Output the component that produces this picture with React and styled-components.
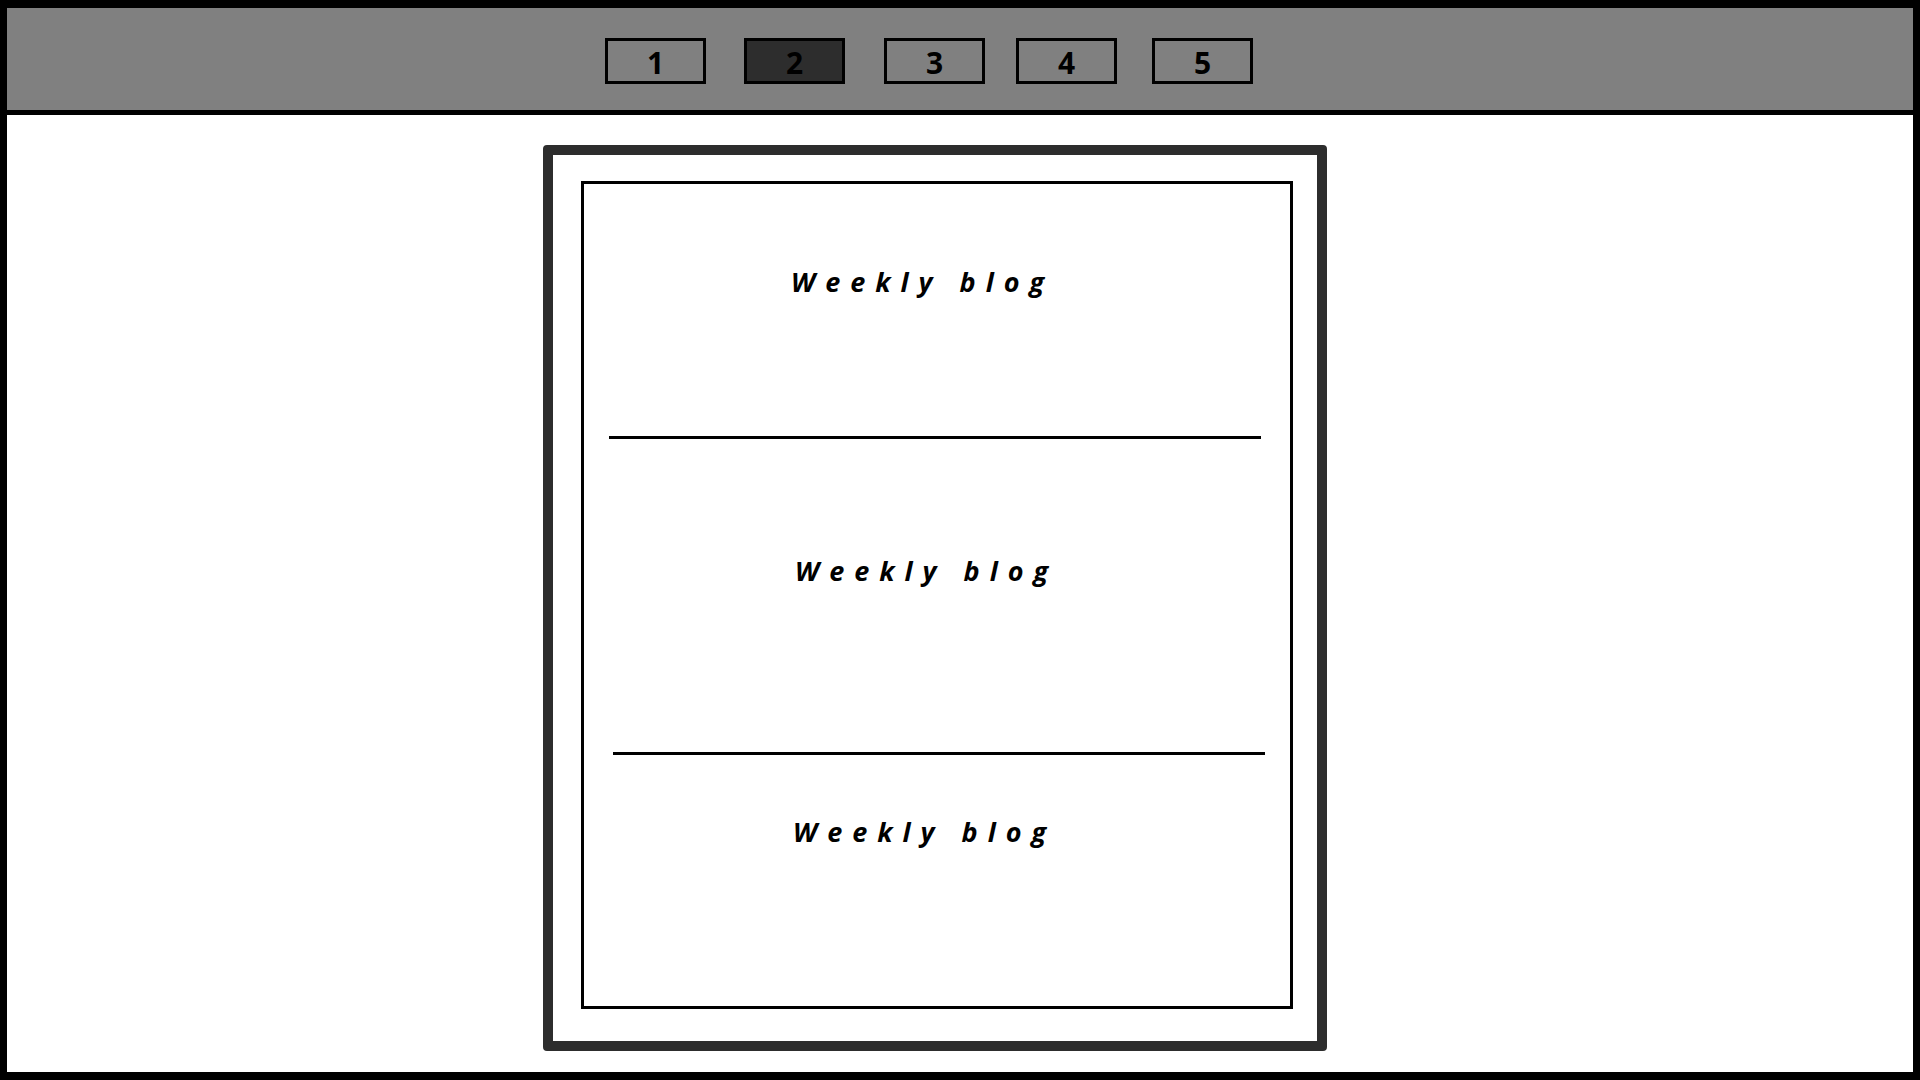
import styled, { createGlobalStyle } from "styled-components";

const GlobalStyle = createGlobalStyle`
  html, body {
    margin: 0;
    padding: 0;
    background: #ffffff;
  }
  * {
    box-sizing: border-box;
  }
`;

const Frame = styled.div`
  width: 1920px;
  height: 1080px;
  border: 7px solid #000000;
  border-top-width: 8px;
  border-bottom-width: 8px;
  background: #ffffff;
  display: flex;
  flex-direction: column;
  overflow: hidden;
`;

const TopBar = styled.div`
  height: 107px;
  flex-shrink: 0;
  background: #808080;
  border-bottom: 5px solid #000000;
  display: flex;
  align-items: flex-start;
  padding: 30px 0 0 598px;
`;

const PageButton = styled.div`
  width: 101px;
  height: 46px;
  margin-left: ${(p) => p.offset}px;
  padding-top: 4px;
  border: 3px solid #000000;
  background: ${(p) => (p.active ? "#2d2d2d" : "transparent")};
  display: flex;
  align-items: center;
  justify-content: center;
  font-family: "Open Sans", "Noto Sans", sans-serif;
  font-weight: 700;
  font-size: 30px;
  color: #000000;
  line-height: 1;
`;

const Main = styled.div`
  flex: 1;
  padding: 30px 0 0 536px;
`;

const Card = styled.div`
  width: 784px;
  height: 906px;
  border: 10px solid #2d2d2d;
  border-radius: 4px;
  padding: 26px 24px 32px 28px;
  display: flex;
`;

const Inner = styled.div`
  flex: 1;
  border: 3px solid #000000;
  display: flex;
  flex-direction: column;
`;

const Section = styled.div`
  height: ${(p) => p.h}px;
  flex-shrink: 0;
  padding-top: ${(p) => p.top}px;
  padding-left: ${(p) => p.left}px;
`;

const BlogTitle = styled.div`
  font-family: "Open Sans", "Noto Sans", sans-serif;
  font-weight: 700;
  font-style: italic;
  font-size: 27px;
  line-height: 36px;
  letter-spacing: 10px;
  color: #000000;
  white-space: nowrap;
`;

const Divider = styled.div`
  height: 3px;
  flex-shrink: 0;
  background: #000000;
  margin-left: ${(p) => p.ml}px;
  margin-right: ${(p) => p.mr}px;
`;

const pages = [
  { n: 1, offset: 0 },
  { n: 2, offset: 38, active: true },
  { n: 3, offset: 39 },
  { n: 4, offset: 31 },
  { n: 5, offset: 35 },
];

export default function App() {
  return (
    <>
      <GlobalStyle />
      <Frame>
        <TopBar>
          {pages.map((p) => (
            <PageButton key={p.n} offset={p.offset} active={p.active}>
              {p.n}
            </PageButton>
          ))}
        </TopBar>
        <Main>
          <Card>
            <Inner>
              <Section h={252} top={80} left={207}>
                <BlogTitle>Weekly blog</BlogTitle>
              </Section>
              <Divider ml={25} mr={29} />
              <Section h={313} top={114} left={211}>
                <BlogTitle>Weekly blog</BlogTitle>
              </Section>
              <Divider ml={29} mr={25} />
              <Section h={251} top={59} left={209}>
                <BlogTitle>Weekly blog</BlogTitle>
              </Section>
            </Inner>
          </Card>
        </Main>
      </Frame>
    </>
  );
}
